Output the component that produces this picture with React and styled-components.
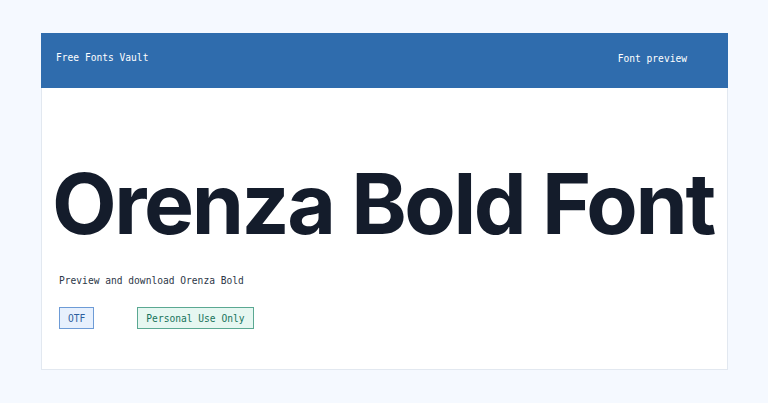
import React from "react";
import styled, { createGlobalStyle } from "styled-components";

const Global = createGlobalStyle`
  html, body { margin: 0; padding: 0; background: #f5f9ff; }
  body { font-family: "DejaVu Sans Mono", "Liberation Mono", monospace; }
`;

const Page = styled.div`
  padding: 33px 40px 0 41px;
`;

const Card = styled.div`
  background: #ffffff;
  border: 1px solid #e2e8f0;
  border-top: none;
  height: 337px;
  box-sizing: border-box;
  display: flex;
  flex-direction: column;
`;

const Header = styled.header`
  background: #2f6cad;
  height: 55px;
  margin: 0 -1px;
  padding: 19px 41px 0 15px;
  box-sizing: border-box;
  display: flex;
  justify-content: space-between;
  align-items: flex-start;
  color: #ffffff;
  font-size: 9.6px;
  line-height: 12px;
`;

const Brand = styled.div``;
const NavLabel = styled.div`
  padding-top: 1px;
`;

const Body = styled.main`
  padding: 0 16px;
  display: flex;
  flex-direction: column;
`;

const Title = styled.h1`
  margin: 66px 0 0 -6px;
  font-family: Inter, "Noto Sans", sans-serif;
  font-weight: 700;
  font-size: 84px;
  line-height: 100px;
  color: #141c2b;
  letter-spacing: -2.4px;
  white-space: nowrap;
`;

const Subtitle = styled.p`
  margin: 21px 0 0 1px;
  font-size: 9.6px;
  line-height: 12px;
  color: #2d3748;
`;

const Badges = styled.div`
  display: flex;
  gap: 43px;
  margin: 20px 0 0 1px;
`;

const Badge = styled.span`
  display: inline-flex;
  align-items: center;
  height: 22px;
  box-sizing: border-box;
  padding: 0 8px;
  font-size: 9.6px;
  border: 1px solid ${(p) => p.$border};
  background: ${(p) => p.$bg};
  color: ${(p) => p.$color};
`;

export default function App() {
  return (
    <>
      <Global />
      <Page>
        <Card>
          <Header>
            <Brand>Free Fonts Vault</Brand>
            <NavLabel>Font preview</NavLabel>
          </Header>
          <Body>
            <Title>Orenza Bold Font</Title>
            <Subtitle>Preview and download Orenza Bold</Subtitle>
            <Badges>
              <Badge $bg="#e7f0fd" $border="#6d9bd6" $color="#2c5e9e">OTF</Badge>
              <Badge $bg="#e6f7f1" $border="#5aa892" $color="#17735a">Personal Use Only</Badge>
            </Badges>
          </Body>
        </Card>
      </Page>
    </>
  );
}
